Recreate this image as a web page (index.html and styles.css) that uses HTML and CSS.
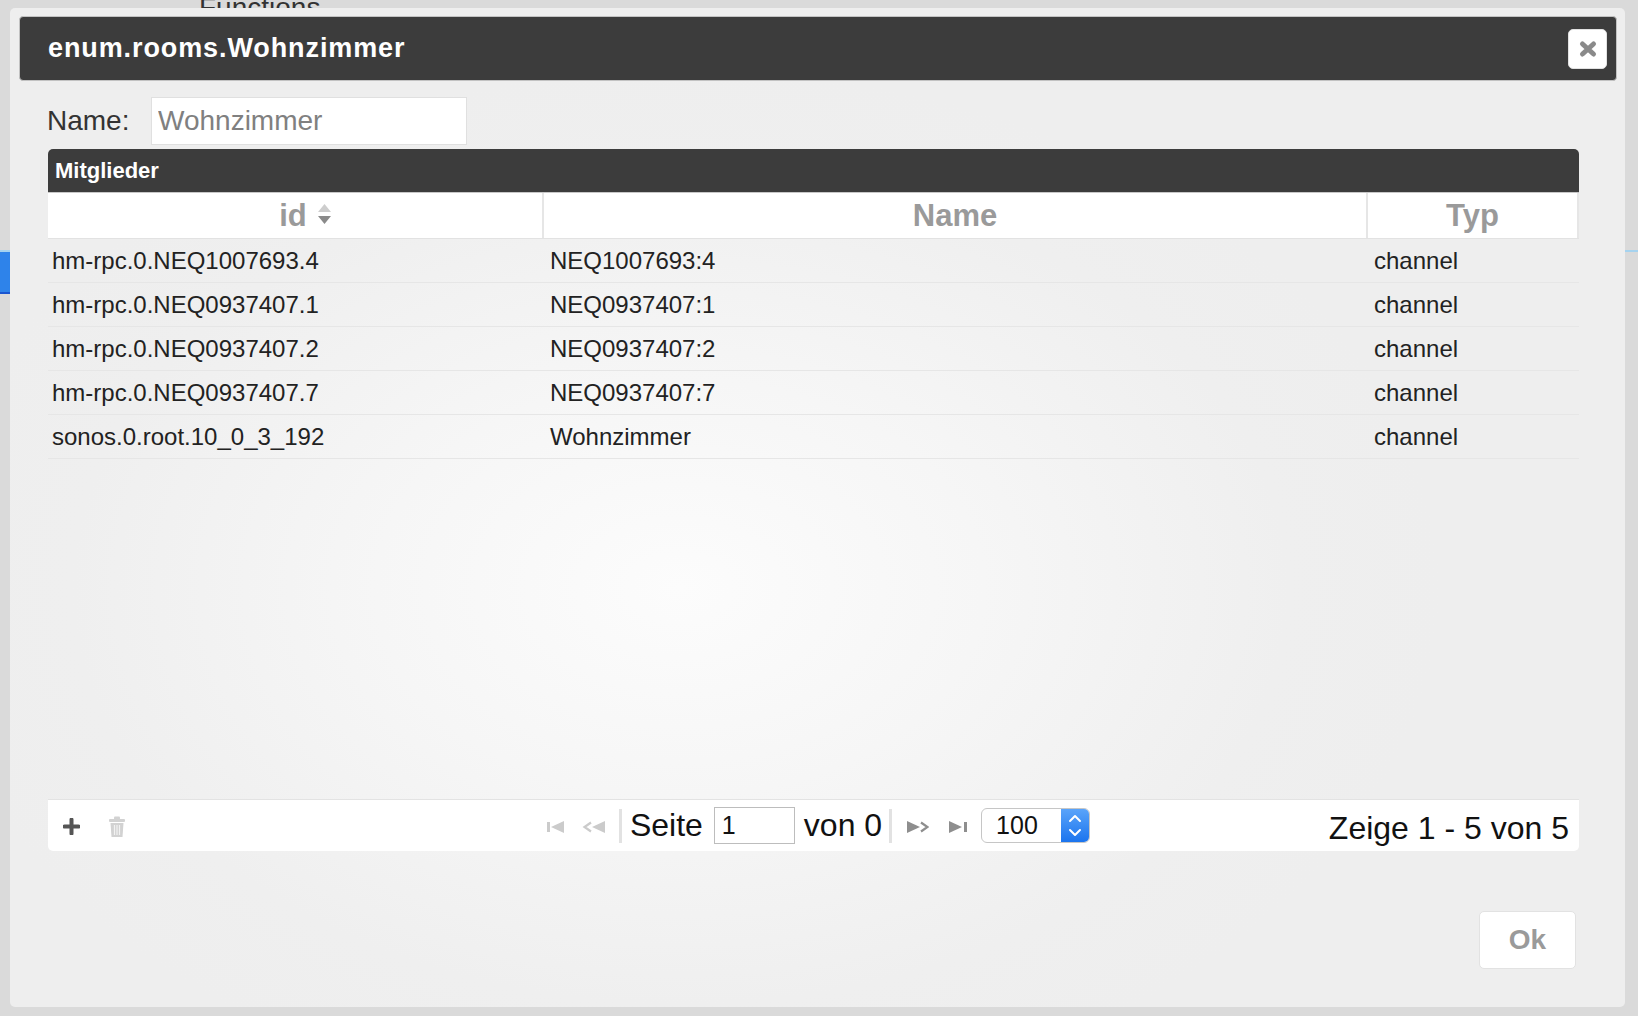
FILE: index.html
```html
<!DOCTYPE html>
<html lang="de">
<head>
<meta charset="utf-8">
<title>enum.rooms.Wohnzimmer</title>
<link rel="stylesheet" href="styles.css">
</head>
<body>
<div class="page">
  <div class="bg-heading">Functions</div>
  <div class="bg-row"><div class="bg-row-sel"></div></div>
</div>

<div class="dialog">
  <div class="titlebar">
    <span class="title">enum.rooms.Wohnzimmer</span>
    <button class="close" type="button" aria-label="close">
      <svg width="20" height="18" viewBox="0 0 20 18"><path d="M4.5 4 L15.5 14 M15.5 4 L4.5 14" stroke="#8a8a8a" stroke-width="5" stroke-linecap="round" fill="none"/></svg>
    </button>
  </div>

  <div class="content">
    <div class="name-row">
      <label class="name-label">Name:</label>
      <input class="name-input" type="text" placeholder="Wohnzimmer">
    </div>

    <div class="grid">
      <div class="grid-caption">Mitglieder</div>
      <div class="grid-head">
        <div class="hcell"><span class="sortable">id<svg class="sort-icon" width="15" height="22" viewBox="0 0 15 22"><polygon points="7.5,1 14,9 1,9" fill="#cdcdcd"/><polygon points="1,13 14,13 7.5,21" fill="#8a8a8a"/></svg></span></div>
        <div class="hcell">Name</div>
        <div class="hcell last">Typ</div>
      </div>
      <div class="grid-body">
        <div class="row"><div class="c1">hm-rpc.0.NEQ1007693.4</div><div class="c2">NEQ1007693:4</div><div class="c3">channel</div></div>
        <div class="row"><div class="c1">hm-rpc.0.NEQ0937407.1</div><div class="c2">NEQ0937407:1</div><div class="c3">channel</div></div>
        <div class="row"><div class="c1">hm-rpc.0.NEQ0937407.2</div><div class="c2">NEQ0937407:2</div><div class="c3">channel</div></div>
        <div class="row"><div class="c1">hm-rpc.0.NEQ0937407.7</div><div class="c2">NEQ0937407:7</div><div class="c3">channel</div></div>
        <div class="row"><div class="c1">sonos.0.root.10_0_3_192</div><div class="c2">Wohnzimmer</div><div class="c3">channel</div></div>
      </div>
      <div class="pager">
        <div class="pager-left">
          <svg class="ic-plus" width="17" height="17" viewBox="0 0 17 17"><path d="M8.5 1.5 V15.5 M1.5 8.5 H15.5" stroke="#555" stroke-width="4" stroke-linecap="round"/></svg>
          <svg class="ic-trash" width="18" height="22" viewBox="0 0 18 22"><rect x="6" y="0.5" width="6" height="3" rx="1" fill="#d2d2d2"/><rect x="1" y="3" width="16" height="3" rx="1" fill="#d2d2d2"/><path d="M2.5 7 H15.5 L14.5 21 H3.5 Z" fill="#d2d2d2"/><path d="M6.5 9 V19 M9 9 V19 M11.5 9 V19" stroke="#f2f2f2" stroke-width="1.2"/></svg>
        </div>
        <div class="pager-center">
          <svg class="pg-first" width="18" height="12" viewBox="0 0 18 12"><rect x="0" y="1" width="3" height="10" fill="#cbcbcb"/><polygon points="4,6 17,0 17,12" fill="#cbcbcb"/></svg>
          <svg class="pg-prev" width="23" height="12" viewBox="0 0 23 12"><polyline points="9,1.5 2.5,6 9,10.5" fill="none" stroke="#cbcbcb" stroke-width="2.2"/><polygon points="10,6 23,0 23,12" fill="#cbcbcb"/></svg>
          <span class="pg-sep"></span>
          <span class="pg-text seite">Seite</span>
          <input class="pg-input" type="text" value="1">
          <span class="pg-text von">von 0</span>
          <span class="pg-sep sep2"></span>
          <svg class="pg-next" width="22" height="12" viewBox="0 0 22 12"><polygon points="0,0 13,6 0,12" fill="#8e8e8e"/><polyline points="14,1.5 20.5,6 14,10.5" fill="none" stroke="#8e8e8e" stroke-width="2.2"/></svg>
          <svg class="pg-last" width="19" height="12" viewBox="0 0 19 12"><polygon points="0,0 13,6 0,12" fill="#8e8e8e"/><rect x="15" y="1" width="3" height="10" fill="#8e8e8e"/></svg>
          <div class="pg-select">
            <span class="pg-select-val">100</span>
            <span class="pg-select-btn"><svg width="28" height="33" viewBox="0 0 28 33"><polyline points="9,12 14,7 19,12" fill="none" stroke="#fff" stroke-width="2" stroke-linecap="round" stroke-linejoin="round"/><polyline points="9,21 14,26 19,21" fill="none" stroke="#fff" stroke-width="2" stroke-linecap="round" stroke-linejoin="round"/></svg></span>
          </div>
        </div>
        <div class="pager-right">Zeige 1 - 5 von 5</div>
      </div>
    </div>

    <div class="actions">
      <button class="ok" type="button">Ok</button>
    </div>
  </div>
</div>
</body>
</html>
```

FILE: styles.css
```css
html, body {
  margin: 0;
  padding: 0;
}

body {
  width: 1638px;
  height: 1016px;
  overflow: hidden;
  position: relative;
  background: #dadada;
  font-family: "Liberation Sans", Arial, Helvetica, sans-serif;
  color: #222;
}

/* page behind the modal */
.page {
  display: flex;
  flex-direction: column;
}

.bg-heading {
  font-size: 28px;
  line-height: 28px;
  color: #333;
  margin: -6px 0 0 199px;
}

.bg-row {
  margin-top: 228px;
  height: 42px;
  border-top: 2px solid #a6d3ef;
}

.bg-row-sel {
  width: 10px;
  height: 40px;
  background: #2e83ea;
  border-bottom: 2px solid #1a55d0;
}

/* modal dialog */
.dialog {
  position: absolute;
  left: 10px;
  top: 8px;
  width: 1615px;
  height: 999px;
  box-sizing: border-box;
  border-radius: 5px;
  background:
    radial-gradient(ellipse 760px 520px at 670px 580px, #fcfcfc 0%, #f6f6f6 40%, #efefef 80%, #eeeeee 100%),
    #eeeeee;
  display: flex;
  flex-direction: column;
}

.titlebar {
  margin: 8px 8px 0 9px;
  height: 65px;
  box-sizing: border-box;
  border: 1px solid #c2c2c2;
  border-radius: 4px;
  background: #3c3c3c;
  display: flex;
  align-items: center;
  justify-content: space-between;
  padding: 0 9px 0 28px;
}

.title {
  color: #fff;
  font-weight: bold;
  font-size: 27px;
  letter-spacing: 0.9px;
}

.close {
  width: 39px;
  height: 40px;
  margin-top: 1px;
  padding: 0;
  border: 1px solid #e2e2e2;
  border-radius: 5px;
  background: #fff;
  display: flex;
  align-items: center;
  justify-content: center;
}

.content {
  padding: 0 46px 0 38px;
  display: flex;
  flex-direction: column;
}

.name-row {
  margin-top: 16px;
  display: flex;
  align-items: center;
  height: 48px;
}

.name-label {
  width: 104px;
  font-size: 28px;
  color: #333;
  margin-left: -1px;
}

.name-input {
  width: 316px;
  height: 48px;
  box-sizing: border-box;
  border: 1px solid #e0e0e0;
  background: #fff;
  padding: 0 6px;
  font-family: "Liberation Sans", Arial, sans-serif;
  font-size: 28px;
  color: #808080;
  outline: none;
}

.name-input::placeholder {
  color: #808080;
  opacity: 1;
}

/* grid */
.grid {
  margin-top: 4px;
  display: flex;
  flex-direction: column;
}

.grid-caption {
  height: 43px;
  line-height: 43px;
  background: #3c3c3c;
  border-radius: 5px 5px 0 0;
  color: #fff;
  font-weight: bold;
  font-size: 22px;
  padding-left: 7px;
  border-bottom: 1px solid #c8c8c8;
}

.grid-head {
  display: grid;
  grid-template-columns: 496px 824px 211px;
  height: 46px;
  box-sizing: border-box;
  background: #fff;
  border-bottom: 1px solid #e2e2e2;
}

.hcell {
  display: flex;
  align-items: center;
  justify-content: center;
  font-weight: bold;
  font-size: 31px;
  color: #9a9a9a;
  border-right: 2px solid #e6e6e6;
}

.sortable {
  position: relative;
  left: -2px;
}

.sort-icon {
  position: absolute;
  left: 38px;
  top: 5px;
}

.grid-body {
  height: 560px;
  display: flex;
  flex-direction: column;
}

.row {
  display: grid;
  grid-template-columns: 496px 824px 211px;
  height: 44px;
  box-sizing: border-box;
  border-bottom: 1px solid #e6e6e6;
  font-size: 24px;
  color: #222;
  align-items: center;
}

.c1 { padding-left: 4px; }
.c2 { padding-left: 6px; }
.c3 { padding-left: 6px; }

/* pager */
.pager {
  height: 52px;
  box-sizing: border-box;
  border-top: 1px solid #e3e3e3;
  background: #fff;
  border-radius: 0 0 5px 5px;
  display: grid;
  grid-template-columns: 1fr auto 1fr;
  align-items: center;
  padding-left: 10px;
}

.pager-left {
  display: flex;
  align-items: center;
  padding-left: 5px;
}

.ic-plus {
  margin-top: 2px;
}

.ic-trash {
  margin-left: 28px;
  margin-top: 2px;
}

.pager-center {
  display: flex;
  align-items: center;
}

.pg-first { margin-top: 2px; }

.pg-prev {
  margin-left: 17px;
  margin-top: 2px;
}

.pg-sep {
  width: 3px;
  height: 34px;
  background: #e2e2e2;
  margin-left: 14px;
}

.pg-text {
  font-size: 32px;
  color: #111;
}

.seite { margin-left: 8px; }

.pg-input {
  width: 81px;
  height: 37px;
  box-sizing: border-box;
  border: 1px solid #bdbdbd;
  margin-left: 11px;
  padding: 0 7px;
  font-family: "Liberation Sans", Arial, sans-serif;
  font-size: 25px;
  color: #111;
  background: #fff;
  outline: none;
}

.von { margin-left: 9px; }

.sep2 { margin-left: 7px; }

.pg-next {
  margin-left: 15px;
  margin-top: 2px;
}

.pg-last {
  margin-left: 20px;
  margin-top: 2px;
}

.pg-select {
  margin-left: 13px;
  width: 109px;
  height: 35px;
  box-sizing: border-box;
  border: 1px solid #c6c6c6;
  border-radius: 6px;
  background: #fff;
  display: flex;
  align-items: stretch;
  overflow: hidden;
}

.pg-select-val {
  flex: 1;
  font-size: 25px;
  color: #111;
  padding-left: 14px;
  display: flex;
  align-items: center;
}

.pg-select-btn {
  width: 28px;
  background: linear-gradient(#5aa4fa, #1b74ee);
  display: flex;
  align-items: center;
  justify-content: center;
}

.pager-right {
  text-align: right;
  font-size: 32px;
  color: #111;
  padding-right: 10px;
  padding-top: 6px;
}

/* actions */
.actions {
  display: flex;
  justify-content: flex-end;
  margin-top: 60px;
  padding-right: 3px;
}

.ok {
  width: 97px;
  height: 58px;
  border: 1px solid #e2e2e2;
  border-radius: 5px;
  background: #fff;
  font-family: "Liberation Sans", Arial, sans-serif;
  font-weight: bold;
  font-size: 28px;
  color: #9a9a9a;
  padding: 0;
}
```
